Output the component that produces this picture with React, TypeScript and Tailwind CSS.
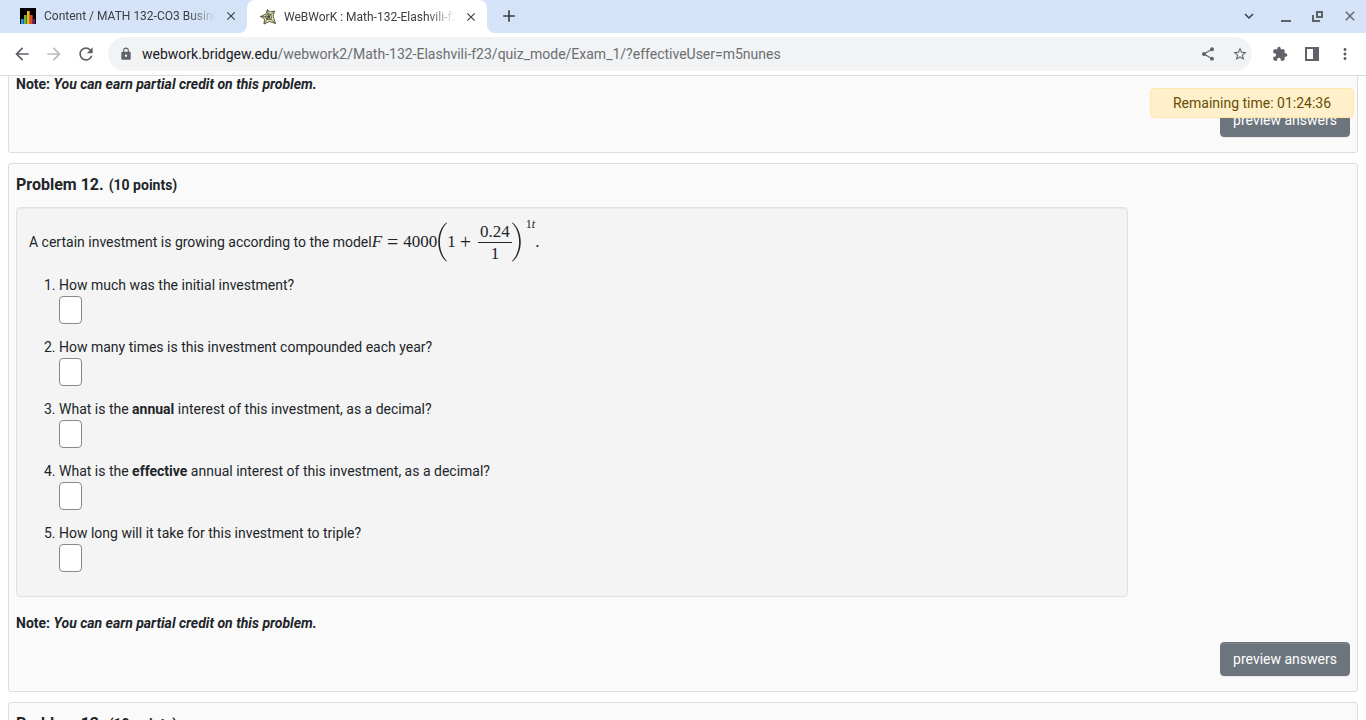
import type { ReactNode } from "react";
import {
  MdAdd,
  MdArrowBack,
  MdArrowForward,
  MdClose,
  MdExpandMore,
  MdExtension,
  MdLock,
  MdMoreVert,
  MdRefresh,
  MdShare,
  MdStarBorder,
} from "react-icons/md";

const questions: ReactNode[] = [
  "How much was the initial investment?",
  "How many times is this investment compounded each year?",
  <>What is the <b>annual</b> interest of this investment, as a decimal?</>,
  <>What is the <b>effective</b> annual interest of this investment, as a decimal?</>,
  "How long will it take for this investment to triple?",
];

function BarsIcon() {
  return (
    <svg viewBox="0 0 16 16" className="size-4 shrink-0" shapeRendering="crispEdges">
      <rect width="16" height="16" fill="#000" />
      <path d="M1 11h3v5H1z" fill="#1565a8" />
      <path d="M1 11h2v5H1z" fill="#2196f3" />
      <path d="M4 7h3v9H4z" fill="#3d7a1c" />
      <path d="M4 7h2v9H4z" fill="#6fb536" />
      <path d="M7 3h3v13H7z" fill="#b37a10" />
      <path d="M7 3h2v13H7z" fill="#f5b222" />
      <path d="M10 7h3v9h-3z" fill="#8f2413" />
      <path d="M10 7h2v9h-2z" fill="#e2472b" />
      <path d="M13 11h2v5h-2z" fill="#5b1c8c" />
    </svg>
  );
}

function WebIcon() {
  return (
    <svg viewBox="0 0 16 16" className="size-4 shrink-0" fill="none">
      <path d="M7.5.5 9.500 3l5-1-1.500 5 2.500 7.500-6-2L4 15l.5-5L.5 7.500 6 5Z" fill="#e6e8a8" stroke="#3f3f35" strokeWidth=".8" />
      <path d="m8.500 8-1-7M8.500 8l6-6M8.500 8l7 6.500M8.500 8 4 15M8.500 8l-8-.5M7 5.500 10.500 5l1 4L10 11l-3.500-1L5.500 7.500ZM8 7h1.500v2H8Z" stroke="#3f3f35" strokeWidth=".8" />
    </svg>
  );
}

function Tab({ icon, title, active }: { icon: ReactNode; title: string; active?: boolean }) {
  return (
    <div className={active ? "relative flex h-full w-60 items-center rounded-t-lg bg-white pr-2 pl-[13px]" : "flex h-full w-60 items-center pr-2 pl-[13px]"}>
      {active && (
        <svg viewBox="0 0 256 8" className="absolute -left-2 bottom-0 h-2 w-64" fill="#fff">
          <path d="M0 8a8 8 0 0 0 8-8v8ZM256 8a8 8 0 0 1-8-8v8Z" />
        </svg>
      )}
      {icon}
      <span className="ml-2 w-[172px] overflow-hidden text-xs whitespace-nowrap text-[#3c4043] [mask-image:linear-gradient(to_right,#000_144px,transparent_172px)]">
        {title}
      </span>
      <button aria-label="Close tab" className="ml-2 text-[#3c4043]">
        <MdClose size={14} />
      </button>
    </div>
  );
}

function Browser() {
  return (
    <header className="relative z-10 border-b border-[#d9dadc] bg-white">
      <div className="flex h-[33px] bg-[#d4e3f7] pl-[7px] text-[#3c4043]">
        <div className="flex h-8 w-full items-center">
          <Tab icon={<BarsIcon />} title="Content / MATH 132-CO3 Business" />
          <div className="h-[33px] self-start bg-[#d4e3f7]">
            <Tab icon={<WebIcon />} title="WeBWorK : Math-132-Elashvili-f23" active />
          </div>
          <button aria-label="New tab" className="ml-3">
            <MdAdd size={20} />
          </button>
          <div className="mr-2 ml-auto flex items-center gap-4">
            <button aria-label="Search tabs" className="mr-1">
              <MdExpandMore size={18} />
            </button>
            <button aria-label="Minimize">
              <svg viewBox="0 0 16 16" className="size-4" fill="#5f6368"><path d="M3 12h10v2H3z" /></svg>
            </button>
            <button aria-label="Restore">
              <svg viewBox="0 0 16 16" className="size-4" fill="none" stroke="#5f6368" strokeWidth="2">
                <path d="M7 4h5v5H7zM3 7v6h7" />
              </svg>
            </button>
            <button aria-label="Close window" className="text-[#5f6368]">
              <MdClose size={16} />
            </button>
          </div>
        </div>
      </div>
      <div className="flex h-[42px] items-center gap-3 px-3 text-[#5f6368]">
        <button aria-label="Back"><MdArrowBack size={20} /></button>
        <button aria-label="Forward" className="text-[#b9bbbd]"><MdArrowForward size={20} /></button>
        <button aria-label="Reload"><MdRefresh size={20} /></button>
        <div className="flex h-[34px] flex-1 items-center rounded-full bg-[#f1f3f4] pr-1 pl-[11px]">
          <MdLock size={14} />
          <a href="#address" className="ml-[9px] flex-1 text-sm text-[#6b6e72]">
            <span className="text-[#202124]">webwork.bridgew.edu</span>/webwork2/Math-132-Elashvili-f23/quiz_mode/Exam_1/?effectiveUser=m5nunes
          </a>
          <button aria-label="Share" className="mr-4"><MdShare size={16} /></button>
          <button aria-label="Bookmark"><MdStarBorder size={16} /></button>
        </div>
        <div className="ml-2 flex items-center gap-4">
          <button aria-label="Extensions"><MdExtension size={16} /></button>
          <button aria-label="Side panel">
            <svg viewBox="0 0 16 16" className="size-4" fill="#5f6368">
              <path d="M1 1h14v14H1zM3 3v10h6V3z" fillRule="evenodd" />
            </svg>
          </button>
          <button aria-label="Menu"><MdMoreVert size={18} /></button>
        </div>
      </div>
    </header>
  );
}

function Paren({ right }: { right?: boolean }) {
  return (
    <svg viewBox="0 0 10 40" className="h-10 w-[10px]" fill="#212529">
      <path
        d={
          right
            ? "M.5.5C11.500 9 11.500 31 .5 39.500L0 39C9.500 30 9.500 10 0 1Z"
            : "M9.500.5C-1.500 9-1.500 31 9.500 39.500L10 39C.5 30 .5 10 10 1Z"
        }
      />
    </svg>
  );
}

function Formula() {
  return (
    <span className="inline-flex items-center font-['Liberation_Serif',serif] text-[17px]">
      <i>F</i>
      <span className="mx-[5px] text-xl leading-none">=</span>
      <span>4000</span>
      <Paren />
      <span>1</span>
      <span className="mx-1 text-xl leading-none">+</span>
      <span className="ml-[3px] flex flex-col text-center leading-[21px]">
        <span className="border-b border-[#212529] px-[2px]">0.24</span>
        <span>1</span>
      </span>
      <Paren right />
      <span className="mb-9 ml-1 text-xs">1<i>t</i></span>
      <span>.</span>
    </span>
  );
}

function PreviewButton() {
  return (
    <button className="h-[34px] rounded border border-[#6c757d] bg-[#6c757d] px-3 text-sm text-white shadow-[inset_0_1px_0_rgba(255,255,255,0.15),0_1px_1px_rgba(0,0,0,0.075)]">
      preview answers
    </button>
  );
}

function PartialCredit() {
  return (
    <p className="leading-[21px] font-bold">
      Note: <i>You can earn partial credit on this problem.</i>
    </p>
  );
}

function Heading({ number }: { number: number }) {
  return (
    <h2 className="text-base leading-5 font-bold">
      Problem {number}. <span className="ml-px text-sm">(10 points)</span>
    </h2>
  );
}

export default function App() {
  return (
    <div className="h-screen overflow-hidden bg-white font-[Roboto,sans-serif] text-sm text-[#212529]">
      <Browser />
      <div className="absolute top-[88px] right-3 z-20 w-[204px] rounded-sm border border-[#ffe8a8] bg-[#fff0cb] text-center leading-7 text-[#664d03]">
        Remaining time: 01:24:36
      </div>
      <main className="flex flex-col gap-[10px] px-2">
        <section className="-mt-[3px] rounded-[3px] border border-[#dcdcde] bg-[#fafafa] px-[7px] pb-[15px]">
          <PartialCredit />
          <div className="mt-2 flex justify-end"><PreviewButton /></div>
        </section>
        <section className="rounded-[3px] border border-[#dcdcde] bg-[#fafafa] px-[7px] pt-[11px] pb-[15px]">
          <Heading number={12} />
          <div className="mt-3 w-5/6 rounded border border-[#e2e2e3] bg-[#f4f4f4] px-3 pt-3 pb-6 shadow-[inset_0_1px_1px_rgba(0,0,0,0.05)]">
            <div className="flex h-11 items-center">A certain investment is growing according to the model <Formula /></div>
            <ol className="mt-[11px] flex list-decimal flex-col gap-[13px] pl-[30px]">
              {questions.map((question, i) => (
                <li key={i} className="leading-[21px]">
                  <label htmlFor={`answer-${i}`} className="block">{question}</label>
                  <input id={`answer-${i}`} className="block h-7 w-[23px] rounded border border-[#888] bg-white" />
                </li>
              ))}
            </ol>
          </div>
          <div className="mt-4"><PartialCredit /></div>
          <div className="mt-2 flex justify-end"><PreviewButton /></div>
        </section>
        <section className="rounded-[3px] border border-[#dcdcde] bg-[#fafafa] px-[7px] pt-[11px]">
          <Heading number={13} />
        </section>
      </main>
    </div>
  );
}
